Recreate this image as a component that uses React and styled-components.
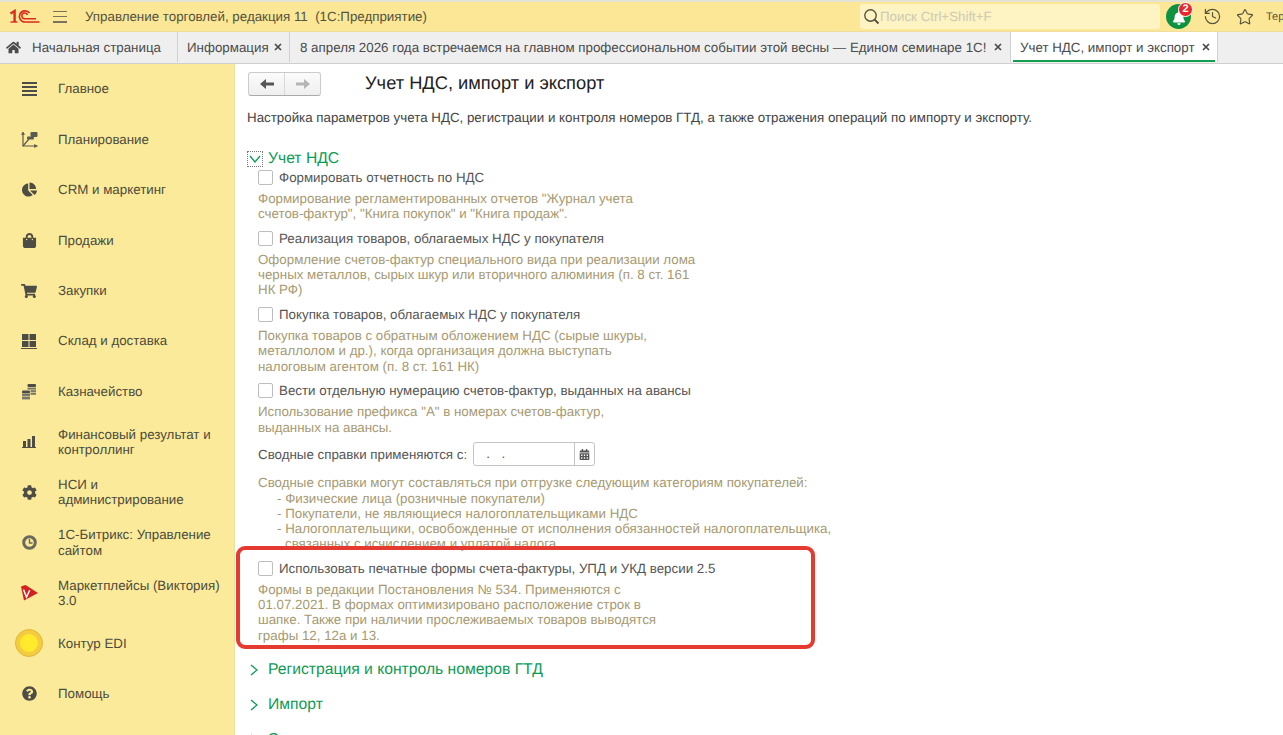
import React from 'react';
import styled, { createGlobalStyle } from 'styled-components';
import {
  FaHome,
  FaChartPie,
  FaShoppingBag,
  FaShoppingCart,
  FaCog,
  FaQuestionCircle,
  FaBell,
  FaCalendarAlt,
} from 'react-icons/fa';
import { History, Star } from 'lucide-react';

const GlobalStyle = createGlobalStyle`
  html, body {
    margin: 0;
    padding: 0;
    height: 100%;
    overflow: hidden;
    background: #fff;
  }
  body {
    font-family: "Liberation Sans", Arial, sans-serif;
    font-size: 13.33px;
    text-rendering: geometricPrecision;
    color: #4b4b4b;
  }
  * {
    box-sizing: border-box;
  }
`;

const Page = styled.div`
  position: relative;
  width: 1283px;
  height: 735px;
  overflow: hidden;
  display: flex;
  flex-direction: column;
`;

const TopBar = styled.header`
  flex: 0 0 32px;
  display: flex;
  align-items: center;
  background: #fbe795;
  border-top: 2px solid #e4e2d2;
  border-bottom: 1px solid #eedf9c;
  padding-left: 10px;
`;

const Hamburger = styled.div`
  width: 14px;
  height: 12px;
  margin-left: 13px;
  display: flex;
  flex-direction: column;
  justify-content: space-between;

  span {
    display: block;
    height: 1.5px;
    background: #77735c;
  }
`;

const AppTitle = styled.div`
  margin: -1px 0 0 18px;
  color: #55533f;
  white-space: pre;
  flex: 1;
`;

const Search = styled.div`
  width: 300px;
  height: 25px;
  margin-right: 6px;
  padding-left: 3px;
  display: flex;
  align-items: center;
  background: #fdf3c3;
  border-radius: 3px;
  color: #cdcab2;
`;

const BellCircle = styled.div`
  position: relative;
  width: 25px;
  height: 25px;
  padding-top: 3px;
  border-radius: 50%;
  background: #0f9142;
  color: #fff;
  display: flex;
  align-items: center;
  justify-content: center;
`;

const Badge = styled.span`
  position: absolute;
  top: -2px;
  right: -2px;
  width: 15px;
  height: 15px;
  border-radius: 50%;
  background: #e8262c;
  border: 1px solid #fff;
  color: #fff;
  font-size: 11px;
  font-weight: 700;
  line-height: 13px;
  text-align: center;
`;

const ToolIcon = styled.div`
  width: 20px;
  margin-left: ${(p) => p.$left}px;
  display: flex;
  justify-content: center;
  color: #55533f;
`;

const UserName = styled.div`
  margin-left: 11px;
  width: 17px;
  overflow: hidden;
  font-size: 11px;
  color: #55533f;
`;

const TabBar = styled.nav`
  flex: 0 0 32px;
  display: flex;
  padding-bottom: 1px;
  background: #efefef;
  border-bottom: 1px solid #cfcfcf;
`;

const Tab = styled.div`
  position: relative;
  width: ${(p) => p.$width}px;
  display: flex;
  align-items: center;
  justify-content: space-between;
  padding: 0 ${(p) => p.$right || 11}px 0 ${(p) => p.$left || 10}px;
  background: ${(p) => (p.$active ? '#fff' : 'transparent')};
  border-right: 1px solid #d0d0d0;
  white-space: nowrap;
  color: #4b4b4b;

  ${(p) =>
    p.$active &&
    `
    &::after {
      content: '';
      position: absolute;
      left: 2px;
      right: 2px;
      bottom: 0;
      height: 2px;
      background: #11a04f;
    }
  `}
`;

const HomeLabel = styled.span`
  display: flex;
  align-items: center;
  gap: 11px;
`;

const Body = styled.div`
  flex: 1;
  display: flex;
  min-height: 0;
`;

const Sidebar = styled.aside`
  flex: 0 0 235px;
  display: grid;
  grid-auto-rows: 50.4px;
  align-content: start;
  background: #fbea9a;
  border-right: 1px solid #eee0a0;
`;

const MenuItem = styled.div`
  display: flex;
  align-items: center;
`;

const MenuIcon = styled.div`
  flex: 0 0 58px;
  display: flex;
  justify-content: center;
  color: #4d4d46;
`;

const MenuLabel = styled.div`
  line-height: 15.4px;
  color: #4d4c3c;
`;

const Content = styled.main`
  flex: 1;
  min-width: 0;
  padding: 8px 0 0 12px;
  background: #fff;
  color: #4b4b4b;
`;

const HeadRow = styled.div`
  display: flex;
  align-items: center;
  gap: 44px;
  height: 24px;
`;

const NavButtons = styled.div`
  width: 73px;
  height: 24px;
  margin-left: 1px;
  display: flex;
  background: linear-gradient(#fbfbfb, #efefef);
  border: 1px solid #cbcbcb;
  border-bottom-color: #aaa;
  border-radius: 3px;
`;

const NavButton = styled.div`
  flex: 1;
  display: flex;
  align-items: center;
  justify-content: center;
  color: ${(p) => (p.$disabled ? '#b5b5b5' : '#555')};

  & + & {
    border-left: 1px solid #d8d8d8;
  }
`;

const PageTitle = styled.h1`
  margin: -2px 0 0;
  font-size: 18.3px;
  font-weight: 400;
  color: #222;
`;

const Subtitle = styled.p`
  margin: 14px 0 0;
  line-height: 16px;
  color: #444;
`;

const GroupHead = styled.div`
  height: 20px;
  margin-top: ${(p) => p.$top}px;
  display: flex;
  align-items: center;
  gap: ${(p) => (p.$open ? 5 : 8)}px;
  font-size: 15.7px;
  color: #0e9a55;
`;

const GroupToggle = styled.div`
  width: ${(p) => (p.$open ? 16 : 13)}px;
  height: 16px;
  display: flex;
  align-items: center;
  justify-content: center;
  border: ${(p) => (p.$open ? '1px dotted #777' : 'none')};
`;

const Settings = styled.div`
  margin: 0.4px 0 0 11px;
  display: flex;
  flex-direction: column;
  gap: 9px;
`;

const Block = styled.div`
  display: flex;
  flex-direction: column;
  gap: 5.6px;
`;

const CheckRow = styled.label`
  height: 16px;
  display: flex;
  align-items: center;
  gap: 6px;
  color: #555;
`;

const CheckBox = styled.span`
  width: 15px;
  height: 15px;
  background: #fff;
  border: 1px solid #bdbdbd;
  border-radius: 2px;
`;

const Note = styled.div`
  line-height: 15.2px;
  color: #a69a72;
`;

const Line = styled.div`
  white-space: nowrap;
  padding-left: ${(p) => p.$indent || 0}px;
`;

const DateRow = styled.div`
  height: 24px;
  margin-top: -1.5px;
  display: flex;
  align-items: center;
  gap: 6px;
  color: #555;
`;

const DateField = styled.div`
  width: 122px;
  height: 24px;
  display: flex;
  background: #fff;
  border: 1px solid #c4c4c4;
  border-radius: 3px;
`;

const DateValue = styled.div`
  flex: 1;
  padding-left: 12px;
  line-height: 22px;
  letter-spacing: 4px;
`;

const DateButton = styled.div`
  flex: 0 0 20px;
  display: flex;
  align-items: center;
  justify-content: center;
  border-left: 1px solid #c4c4c4;
  color: #555;
`;

const Highlight = styled.div`
  position: absolute;
  left: 236px;
  top: 546px;
  width: 579px;
  height: 103px;
  border: 4px solid #e53a30;
  border-radius: 9px;
  pointer-events: none;
`;

const Logo1C = () => (
  <svg width="30" height="15" viewBox="0 0 30 15" fill="none" stroke="#dc2a1e">
    <path d="M0.5 4.5 L4.6 2 V13" strokeWidth="2.4" />
    <path d="M0.5 13 H7.5" strokeWidth="1.4" />
    <path d="M19.5 4 A5.6 5.6 0 1 0 15 13 H29.5" strokeWidth="1.7" />
    <path d="M17.5 6 A2.9 2.9 0 1 0 15 9.8 H26" strokeWidth="1.5" />
  </svg>
);

const SearchIcon = () => (
  <svg width="17" height="17" viewBox="0 0 17 17" fill="none" stroke="#55533f">
    <circle cx="7.5" cy="7.5" r="5.7" strokeWidth="1.4" />
    <path d="M11.5 11.5 L15.5 15.5" strokeWidth="2" />
  </svg>
);

const CloseIcon = () => (
  <svg width="8" height="8" viewBox="0 0 8 8" stroke="#4a4a4a" strokeWidth="1.7">
    <path d="M1 1 L7 7 M7 1 L1 7" />
  </svg>
);

const NavArrow = ({ right }) => (
  <svg width="14" height="10" viewBox="0 0 14 10" fill="currentColor">
    <path d={right ? 'M14 5 L8 0 V3.4 H0 V6.6 H8 V10 Z' : 'M0 5 L6 0 V3.4 H14 V6.6 H6 V10 Z'} />
  </svg>
);

const ListIcon = () => (
  <svg width="15" height="14" viewBox="0 0 15 14" fill="#4d4d46">
    <rect y="0" width="15" height="2" />
    <rect y="4" width="15" height="2" />
    <rect y="8" width="15" height="2" />
    <rect y="12" width="15" height="2" />
  </svg>
);

const PlanIcon = () => (
  <svg width="17" height="17" viewBox="0 0 17 17" fill="#5a5a52" stroke="#5a5a52">
    <path d="M2 1.5 V15 H15.5" fill="none" strokeWidth="1.2" />
    <path d="M0.5 3.5 L2 1 L3.5 3.5 Z M13.5 13.5 L16.5 15 L13.5 16.5 Z" strokeWidth="0.6" />
    <path d="M2 15 L8 8" fill="none" strokeWidth="1.2" />
    <rect x="9.5" y="1" width="7" height="5" rx="1" stroke="none" />
    <rect x="6" y="5.5" width="7" height="3" rx="1" stroke="none" />
  </svg>
);

const StockIcon = () => (
  <svg width="16" height="15" viewBox="0 0 16 15" fill="#4d4d46">
    <rect x="1" y="0" width="6.5" height="6" />
    <rect x="8.5" y="0" width="6.5" height="6" />
    <rect x="1" y="7" width="6.5" height="6" />
    <rect x="8.5" y="7" width="6.5" height="6" />
    <rect x="0" y="14" width="16" height="1" />
  </svg>
);

const CoinsIcon = () => (
  <svg width="14" height="16" viewBox="0 0 14 16">
    <rect x="5.5" y="0" width="8.5" height="3" rx="1" fill="#4d4d46" />
    <rect x="5.5" y="3.6" width="8.5" height="2" fill="#77776b" />
    <rect x="8.5" y="6.2" width="5.5" height="2" fill="#77776b" />
    <rect x="8.5" y="8.8" width="5.5" height="2" fill="#77776b" />
    <rect x="0" y="6.4" width="8" height="3" rx="1" fill="#4d4d46" />
    <rect x="0" y="10" width="8" height="2.4" fill="#77776b" />
    <rect x="0" y="13" width="8" height="2.4" fill="#77776b" />
  </svg>
);

const BarsIcon = () => (
  <svg width="14" height="12" viewBox="0 0 14 12" fill="#4d4d46">
    <rect x="1" y="5" width="3" height="6" />
    <rect x="5.5" y="3" width="3" height="8" />
    <rect x="10" y="0" width="3" height="11" />
    <rect x="0" y="11" width="14" height="1" />
  </svg>
);

const BitrixIcon = () => (
  <svg width="15" height="15" viewBox="0 0 15 15" fill="none">
    <circle cx="7.5" cy="7.5" r="5.8" stroke="#6a6a5c" strokeWidth="3" />
    <path d="M7.5 4 V8 H10.5" stroke="#6a6a5c" strokeWidth="1.4" />
  </svg>
);

const VictoriaIcon = () => (
  <svg width="17" height="16" viewBox="0 0 17 16">
    <path d="M0 1.5 L4.5 0 L17 8 L3 15.5 Z" fill="#d3201f" />
    <path d="M2.5 4.5 L5.5 12 L8.8 5" fill="none" stroke="#fff" strokeWidth="1.5" />
  </svg>
);

const KonturIcon = () => (
  <svg width="28" height="28" viewBox="0 0 28 28">
    <circle cx="14" cy="14" r="13.5" fill="#f5cb3f" stroke="#dfb83a" />
    <circle cx="14" cy="14" r="9" fill="#ffea2c" />
  </svg>
);

const Chevron = ({ open }) => (
  <svg width="12" height="12" viewBox="0 0 12 12" fill="none" stroke="#0e9a55" strokeWidth="1.3">
    <path d={open ? 'M1 3 L6 9 L11 3' : 'M3 1 L9 6 L3 11'} />
  </svg>
);

const menu = [
  { label: ['Главное'], icon: <ListIcon /> },
  { label: ['Планирование'], icon: <PlanIcon /> },
  { label: ['CRM и маркетинг'], icon: <FaChartPie size={15} /> },
  { label: ['Продажи'], icon: <FaShoppingBag size={15} /> },
  { label: ['Закупки'], icon: <FaShoppingCart size={16} /> },
  { label: ['Склад и доставка'], icon: <StockIcon /> },
  { label: ['Казначейство'], icon: <CoinsIcon /> },
  { label: ['Финансовый результат и', 'контроллинг'], icon: <BarsIcon /> },
  { label: ['НСИ и', 'администрирование'], icon: <FaCog size={15} /> },
  { label: ['1С-Битрикс: Управление', 'сайтом'], icon: <BitrixIcon /> },
  { label: ['Маркетплейсы (Виктория)', '3.0'], icon: <VictoriaIcon /> },
  { label: ['Контур EDI'], icon: <KonturIcon /> },
  { label: ['Помощь'], icon: <FaQuestionCircle size={15} /> },
];

const options = [
  {
    title: 'Формировать отчетность по НДС',
    note: ['Формирование регламентированных отчетов "Журнал учета', 'счетов-фактур", "Книга покупок" и "Книга продаж".'],
  },
  {
    title: 'Реализация товаров, облагаемых НДС у покупателя',
    note: [
      'Оформление счетов-фактур специального вида при реализации лома',
      'черных металлов, сырых шкур или вторичного алюминия (п. 8 ст. 161',
      'НК РФ)',
    ],
  },
  {
    title: 'Покупка товаров, облагаемых НДС у покупателя',
    note: [
      'Покупка товаров с обратным обложением НДС (сырые шкуры,',
      'металлолом и др.), когда организация должна выступать',
      'налоговым агентом (п. 8 ст. 161 НК)',
    ],
  },
  {
    title: 'Вести отдельную нумерацию счетов-фактур, выданных на авансы',
    note: ['Использование префикса "А" в номерах счетов-фактур,', 'выданных на авансы.'],
  },
];

const Option = ({ title, note }) => (
  <Block>
    <CheckRow>
      <CheckBox />
      {title}
    </CheckRow>
    <Note>
      {note.map((line) => (
        <Line key={line}>{line}</Line>
      ))}
    </Note>
  </Block>
);

const App = () => (
  <Page>
    <GlobalStyle />
    <TopBar>
      <Logo1C />
      <Hamburger>
        <span />
        <span />
        <span />
      </Hamburger>
      <AppTitle>Управление торговлей, редакция 11  (1С:Предприятие)</AppTitle>
      <Search>
        <SearchIcon />
        Поиск Ctrl+Shift+F
      </Search>
      <BellCircle>
        <FaBell size={14} />
        <Badge>2</Badge>
      </BellCircle>
      <ToolIcon $left={11}>
        <History size={19} strokeWidth={1.5} />
      </ToolIcon>
      <ToolIcon $left={13}>
        <Star size={18} strokeWidth={1.5} />
      </ToolIcon>
      <UserName>Тер</UserName>
    </TopBar>

    <TabBar>
      <Tab $width={178} $left={6}>
        <HomeLabel>
          <FaHome size={15} />
          Начальная страница
        </HomeLabel>
      </Tab>
      <Tab $width={112} $left={9} $right={7}>
        Информация
        <CloseIcon />
      </Tab>
      <Tab $width={721} $left={10} $right={8}>
        8 апреля 2026 года встречаемся на главном профессиональном событии этой весны — Едином семинаре 1С!
        <CloseIcon />
      </Tab>
      <Tab $width={207} $left={9} $right={7} $active>
        Учет НДС, импорт и экспорт
        <CloseIcon />
      </Tab>
    </TabBar>

    <Body>
      <Sidebar>
        {menu.map((item) => (
          <MenuItem key={item.label[0]}>
            <MenuIcon>{item.icon}</MenuIcon>
            <MenuLabel>
              {item.label.map((line) => (
                <Line key={line}>{line}</Line>
              ))}
            </MenuLabel>
          </MenuItem>
        ))}
      </Sidebar>

      <Content>
        <HeadRow>
          <NavButtons>
            <NavButton>
              <NavArrow />
            </NavButton>
            <NavButton $disabled>
              <NavArrow right />
            </NavButton>
          </NavButtons>
          <PageTitle>Учет НДС, импорт и экспорт</PageTitle>
        </HeadRow>
        <Subtitle>
          Настройка параметров учета НДС, регистрации и контроля номеров ГТД, а также отражения операций по импорту и экспорту.
        </Subtitle>

        <GroupHead $top={23} $open>
          <GroupToggle $open>
            <Chevron open />
          </GroupToggle>
          Учет НДС
        </GroupHead>

        <Settings>
          {options.map((option) => (
            <Option key={option.title} {...option} />
          ))}
          <DateRow>
            Сводные справки применяются с:
            <DateField>
              <DateValue>. .</DateValue>
              <DateButton>
                <FaCalendarAlt size={11} />
              </DateButton>
            </DateField>
          </DateRow>
          <Note>
            <Line>Сводные справки могут составляться при отгрузке следующим категориям покупателей:</Line>
            <Line $indent={19}>- Физические лица (розничные покупатели)</Line>
            <Line $indent={19}>- Покупатели, не являющиеся налогоплательщиками НДС</Line>
            <Line $indent={19}>- Налогоплательщики, освобожденные от исполнения обязанностей налогоплательщика,</Line>
            <Line $indent={27}>связанных с исчислением и уплатой налога</Line>
          </Note>
          <Option
            title="Использовать печатные формы счета-фактуры, УПД и УКД версии 2.5"
            note={[
              'Формы в редакции Постановления № 534. Применяются с',
              '01.07.2021. В формах оптимизировано расположение строк в',
              'шапке. Также при наличии прослеживаемых товаров выводятся',
              'графы 12, 12а и 13.',
            ]}
          />
        </Settings>

        <GroupHead $top={17}>
          <GroupToggle>
            <Chevron />
          </GroupToggle>
          Регистрация и контроль номеров ГТД
        </GroupHead>
        <GroupHead $top={15}>
          <GroupToggle>
            <Chevron />
          </GroupToggle>
          Импорт
        </GroupHead>
        <GroupHead $top={15}>
          <GroupToggle>
            <Chevron />
          </GroupToggle>
          Экспорт
        </GroupHead>
      </Content>
    </Body>

    <Highlight />
  </Page>
);

export default App;
